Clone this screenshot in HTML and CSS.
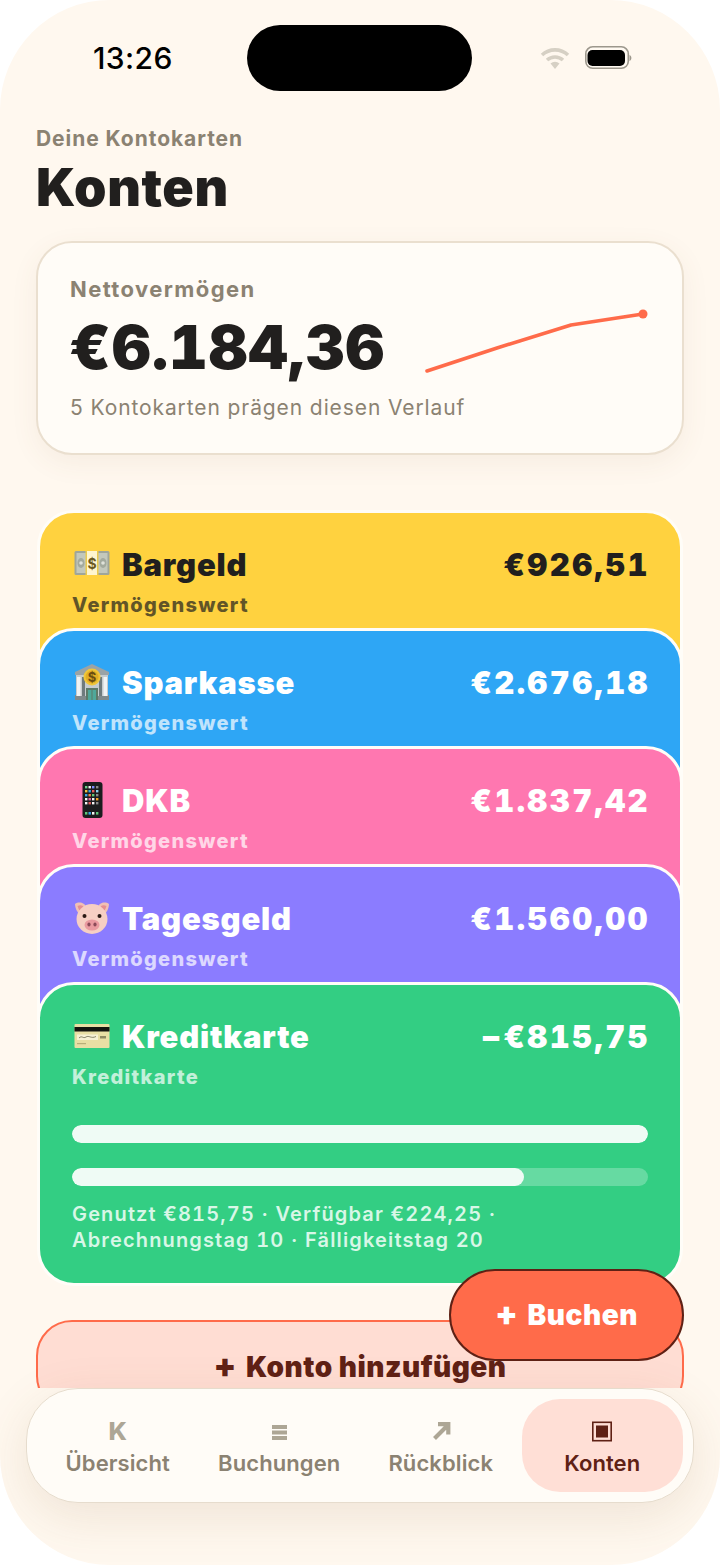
FILE: index.html
```html
<!DOCTYPE html>
<html>
<head>
    <title>Konten</title>
    <link rel="stylesheet" href="styles.css">
</head>

<body>
<div class="phone">
    <div class="status-bar">
        <span class="time">13:26</span>
        <div class="status-icons">
            <svg class="wifi" width="30" height="24" viewBox="0 0 30 24">
                <path d="M2 9 A19 19 0 0 1 28 9" fill="none" stroke="#d6d0c4" stroke-width="3.6"/>
                <path d="M7 14 A12 12 0 0 1 23 14" fill="none" stroke="#d6d0c4" stroke-width="3.6"/>
                <path d="M10.5 17.5 A7 7 0 0 1 19.500 17.500 L15 23 Z" fill="#d6d0c4"/>
            </svg>
            <svg class="battery" width="48" height="24" viewBox="0 0 48 24">
                <rect x="0.800" y="0.800" width="42.500" height="21.500" rx="7" fill="#fff9f1" stroke="#9c978c" stroke-width="1.600"/>
                <rect x="2.500" y="4" width="37.500" height="16" rx="5" fill="#000"/>
                <path d="M44.500 9 C47 10 47 14 44.500 15 Z" fill="#9c978c"/>
            </svg>
        </div>
    </div>
    <div class="island"></div>

    <div class="scroll">
        <p class="eyebrow">Deine Kontokarten</p>
        <h1 class="page-title">Konten</h1>

        <div class="summary">
            <div class="summary-label">Nettovermögen</div>
            <div class="summary-row">
                <div class="summary-amount">€6.184,36</div>
                <svg class="spark" width="225" height="68" viewBox="0 0 225 68">
                    <polyline points="2,63 72,40 146,17 218,6" fill="none" stroke="#ff6b4a" stroke-width="3.600" stroke-linecap="round" stroke-linejoin="round"/>
                    <circle cx="218" cy="6" r="4.500" fill="#ff6b4a"/>
                </svg>
            </div>
            <div class="summary-note">5 Kontokarten prägen diesen Verlauf</div>
        </div>

        <div class="cards">
            <div class="card card-yellow">
                <div class="card-top">
                    <div class="card-name">
                        <svg class="emoji" width="36" height="36" viewBox="0 0 36 36">
                            <rect x="0.500" y="5" width="35" height="24" rx="1.500" fill="#9fa69a"/>
                            <rect x="2.500" y="7" width="31" height="20" fill="#c3c8bc"/>
                            <ellipse cx="7" cy="17" rx="3.500" ry="5" fill="#a3aa9e"/>
                            <ellipse cx="29" cy="17" rx="3.500" ry="5" fill="#a3aa9e"/>
                            <circle cx="7" cy="17" r="1.800" fill="#dfe2da"/>
                            <circle cx="29" cy="17" r="1.800" fill="#dfe2da"/>
                            <rect x="13" y="5" width="10" height="24" fill="#fff6cf"/>
                            <rect x="11.500" y="5" width="1.500" height="24" fill="#e9c94e"/>
                            <rect x="23" y="5" width="1.500" height="24" fill="#e9c94e"/>
                            <text x="18" y="22.500" class="emoji-text" font-size="14" fill="#6b5a22">$</text>
                        </svg>
                        <span>Bargeld</span>
                    </div>
                    <div class="card-amount">€926,51</div>
                </div>
                <div class="card-sub">Vermögenswert</div>
            </div>

            <div class="card card-blue">
                <div class="card-top">
                    <div class="card-name">
                        <svg class="emoji" width="36" height="36" viewBox="0 0 36 36">
                            <path d="M18 0 L35 8 L35 11 L1 11 L1 8 Z" fill="#9aa3a6"/>
                            <rect x="1" y="31" width="34" height="5" fill="#7f8a8c"/>
                            <rect x="2" y="11" width="32" height="21" fill="#c6ccce"/>
                            <rect x="3" y="13" width="3.500" height="19" fill="#f1f3f3"/>
                            <rect x="8" y="13" width="3" height="19" fill="#6f7b7d"/>
                            <rect x="25" y="13" width="3" height="19" fill="#6f7b7d"/>
                            <rect x="29.500" y="13" width="3.500" height="19" fill="#f1f3f3"/>
                            <rect x="12" y="24" width="12" height="12" fill="#5d7a68"/>
                            <rect x="14" y="26" width="3.500" height="10" fill="#4fa89a"/>
                            <rect x="18.500" y="26" width="3.500" height="10" fill="#4fa89a"/>
                            <circle cx="18" cy="13" r="8.500" fill="#f0c63a"/>
                            <circle cx="18" cy="13" r="6.500" fill="#e3ae24"/>
                            <text x="18" y="18" class="emoji-text" font-size="13" fill="#6b4d10">$</text>
                        </svg>
                        <span>Sparkasse</span>
                    </div>
                    <div class="card-amount">€2.676,18</div>
                </div>
                <div class="card-sub">Vermögenswert</div>
            </div>

            <div class="card card-pink">
                <div class="card-top">
                    <div class="card-name">
                        <svg class="emoji" width="36" height="36" viewBox="0 0 36 36">
                            <rect x="8.500" y="0" width="20" height="36" rx="3" fill="#1c1c1e"/>
                            <rect x="11" y="4" width="2.400" height="2.400" fill="#6fd08c"/>
                            <rect x="14.500" y="4" width="2.400" height="2.400" fill="#f5f5f5"/>
                            <rect x="18" y="4" width="2.400" height="2.400" fill="#7d8cff"/>
                            <rect x="22" y="4" width="2.400" height="2.400" fill="#8a8a8a"/>
                            <rect x="11" y="8" width="2.400" height="2.400" fill="#f5c542"/>
                            <rect x="14.500" y="8" width="2.400" height="2.400" fill="#35a7e8"/>
                            <rect x="18" y="8" width="2.400" height="2.400" fill="#e85d5d"/>
                            <rect x="22" y="8" width="2.400" height="2.400" fill="#8bd1f0"/>
                            <rect x="11" y="12" width="2.400" height="2.400" fill="#35a7e8"/>
                            <rect x="14.500" y="12" width="2.400" height="2.400" fill="#f08a4b"/>
                            <rect x="18" y="12" width="2.400" height="2.400" fill="#5fc87a"/>
                            <rect x="22" y="12" width="2.400" height="2.400" fill="#8a8a8a"/>
                            <rect x="11" y="16" width="2.400" height="2.400" fill="#f5f5f5"/>
                            <rect x="14.500" y="16" width="2.400" height="2.400" fill="#e86aa6"/>
                            <rect x="18" y="16" width="2.400" height="2.400" fill="#f5f5f5"/>
                            <rect x="22" y="16" width="2.400" height="2.400" fill="#f5a623"/>
                            <rect x="11" y="20" width="2.400" height="2.400" fill="#f5f5f5"/>
                            <rect x="14.500" y="20" width="2.400" height="2.400" fill="#e85d5d"/>
                            <rect x="18" y="20" width="2.400" height="2.400" fill="#f5f5f5"/>
                            <rect x="22" y="20" width="2.400" height="2.400" fill="#8a8a8a"/>
                            <rect x="11" y="30" width="2.400" height="2.600" fill="#5fc87a"/>
                            <rect x="14.500" y="30" width="2.400" height="2.600" fill="#35a7e8"/>
                            <rect x="18" y="30" width="2.400" height="2.600" fill="#f5f5f5"/>
                            <rect x="22" y="30" width="2.400" height="2.600" fill="#5fc87a"/>
                        </svg>
                        <span>DKB</span>
                    </div>
                    <div class="card-amount">€1.837,42</div>
                </div>
                <div class="card-sub">Vermögenswert</div>
            </div>

            <div class="card card-purple">
                <div class="card-top">
                    <div class="card-name">
                        <svg class="emoji" width="36" height="36" viewBox="0 0 36 36">
                            <path d="M1 4 C5 1 11 3 12 7 L6 15 C3 12 1 8 1 4 Z" fill="#f1c0b4"/>
                            <path d="M35 4 C31 1 25 3 24 7 L30 15 C33 12 35 8 35 4 Z" fill="#f1c0b4"/>
                            <path d="M3.500 6 C6 4.500 9 5 10 7.500 L6.500 12 C5 10 4 8 3.500 6 Z" fill="#e58f91"/>
                            <path d="M32.500 6 C30 4.500 27 5 26 7.500 L29.500 12 C31 10 32 8 32.500 6 Z" fill="#e58f91"/>
                            <ellipse cx="18" cy="19" rx="15.500" ry="15" fill="#f6cfc3"/>
                            <circle cx="10.500" cy="16" r="2" fill="#2a1a14"/>
                            <circle cx="25.500" cy="16" r="2" fill="#2a1a14"/>
                            <ellipse cx="18" cy="25" rx="7.500" ry="5.500" fill="#ea9aa0"/>
                            <ellipse cx="15" cy="24.500" rx="1.600" ry="2" fill="#8c4a58"/>
                            <ellipse cx="21" cy="24.500" rx="1.600" ry="2" fill="#8c4a58"/>
                        </svg>
                        <span>Tagesgeld</span>
                    </div>
                    <div class="card-amount">€1.560,00</div>
                </div>
                <div class="card-sub">Vermögenswert</div>
            </div>

            <div class="card card-green card-credit">
                <div class="card-top">
                    <div class="card-name">
                        <svg class="emoji" width="36" height="36" viewBox="0 0 36 36">
                            <rect x="0.500" y="6" width="35" height="24" rx="1" fill="#e8dfa4"/>
                            <rect x="0.500" y="9" width="35" height="4.500" fill="#14140f"/>
                            <rect x="3" y="16.500" width="21" height="5.500" fill="#f6f1d4"/>
                            <path d="M5 20 C8 17 9 21 12 19 C15 17 17 21 22 18.500" fill="none" stroke="#6b6a50" stroke-width="0.800"/>
                            <rect x="26" y="18" width="6" height="2.500" fill="#8f8a62"/>
                            <rect x="3" y="25" width="9" height="1.200" fill="#b8ae78"/>
                        </svg>
                        <span>Kreditkarte</span>
                    </div>
                    <div class="card-amount">−€815,75</div>
                </div>
                <div class="card-sub">Kreditkarte</div>
                <div class="bars">
                    <div class="bar"><div class="bar-fill" style="width: 100%"></div></div>
                    <div class="bar"><div class="bar-fill" style="width: 78.4%"></div></div>
                </div>
                <div class="card-meta">Genutzt €815,75 · Verfügbar €224,25 · Abrechnungstag 10 · Fälligkeitstag 20</div>
            </div>
        </div>

        <div class="add-account"><span class="plus">+</span>Konto hinzufügen</div>
    </div>

    <div class="fab"><span class="plus">+</span>Buchen</div>

    <div class="tabbar">
        <div class="tab">
            <span class="tab-icon tab-k">K</span>
            <span class="tab-label">Übersicht</span>
        </div>
        <div class="tab">
            <svg class="tab-icon" width="24" height="24" viewBox="0 0 24 24">
                <rect x="5" y="6" width="15" height="4" fill="#ada695"/>
                <rect x="5" y="11.500" width="15" height="4" fill="#ada695"/>
                <rect x="5" y="17" width="15" height="4" fill="#ada695"/>
            </svg>
            <span class="tab-label">Buchungen</span>
        </div>
        <div class="tab">
            <svg class="tab-icon" width="24" height="24" viewBox="0 0 24 24">
                <path d="M5.500 19.500 L18 7 M9 5.200 H19.300 V15.500" fill="none" stroke="#ada695" stroke-width="4.200"/>
            </svg>
            <span class="tab-label">Rückblick</span>
        </div>
        <div class="tab tab-active">
            <svg class="tab-icon" width="24" height="24" viewBox="0 0 24 24">
                <rect x="2.800" y="3.300" width="18.400" height="18.400" fill="none" stroke="#5f2115" stroke-width="1.600"/>
                <rect x="6" y="6.500" width="12" height="12" fill="#5f2115"/>
            </svg>
            <span class="tab-label">Konten</span>
        </div>
    </div>
</div>
</body>
</html>
```

FILE: styles.css
```css
body {
    margin: 0;
    background-color: #fff;
    font-family: 'Inter', 'Liberation Sans', sans-serif;
    color: #211f1e;
}

.phone {
    position: relative;
    width: 720px;
    height: 1565px;
    border-radius: 110px;
    overflow: hidden;
    background-color: #fff8ef;
    display: flex;
    flex-direction: column;
}

.status-bar {
    height: 116px;
    flex: none;
    box-sizing: border-box;
    padding: 38px 87px 0 93px;
    display: flex;
    justify-content: space-between;
    align-items: flex-start;
}

.time {
    font-size: 30px;
    line-height: 40px;
    font-weight: 500;
    letter-spacing: 0.4px;
    color: #000;
}

.status-icons {
    display: flex;
    gap: 15px;
    padding-top: 8px;
}

.island {
    position: absolute;
    left: 247px;
    top: 25px;
    width: 225px;
    height: 66px;
    border-radius: 33px;
    background-color: #000;
}

.scroll {
    flex: 1;
    min-height: 0;
    overflow: hidden;
    padding: 0 36px;
}

.eyebrow {
    margin: 10px 0 0;
    font-size: 21px;
    line-height: 26px;
    font-weight: 700;
    letter-spacing: 0.95px;
    color: #8b8272;
}

.page-title {
    margin: 5px 0 0;
    font-size: 52px;
    line-height: 62px;
    font-weight: 900;
    letter-spacing: 0.6px;
}

.summary {
    margin-top: 22px;
    height: 214px;
    box-sizing: border-box;
    padding: 32px 32px 0;
    background-color: #fffcf7;
    border: 2px solid #eadfcf;
    border-radius: 36px;
    box-shadow: 0 8px 28px rgba(130, 90, 50, 0.07);
}

.summary-label {
    font-size: 22px;
    line-height: 28px;
    font-weight: 700;
    letter-spacing: 1.4px;
    color: #8b8272;
}

.summary-row {
    display: flex;
    justify-content: space-between;
    margin-top: 10px;
    height: 68px;
}

.summary-amount {
    margin-left: -1px;
    font-size: 60px;
    line-height: 68px;
    font-weight: 900;
    letter-spacing: 1.1px;
    font-variant-numeric: tabular-nums;
}

.spark {
    margin-top: -5px;
}

.summary-note {
    margin-top: 13px;
    font-size: 21px;
    line-height: 28px;
    letter-spacing: 0.9px;
    color: #8b8272;
}

.cards {
    margin: 55px 1px 0;
}

.card {
    height: 200px;
    box-sizing: border-box;
    padding: 31px 32px 32px;
    border: 3px solid #fffdf8;
    border-radius: 37px;
    color: #fff;
}

.card + .card {
    margin-top: -82px;
}

.card-credit {
    height: 304px;
}

.card-yellow { background-color: #ffd23f; color: #211f1e; }
.card-blue { background-color: #2ea6f5; }
.card-pink { background-color: #ff77b0; }
.card-purple { background-color: #8b7cff; }
.card-green { background-color: #33ce83; }

.card-top {
    display: flex;
    justify-content: space-between;
    align-items: center;
    height: 40px;
}

.card-name {
    display: flex;
    align-items: center;
    gap: 12px;
    padding-left: 2px;
    font-size: 31px;
    font-weight: 900;
    letter-spacing: 0.8px;
}

.emoji {
    flex: none;
}

.emoji-text {
    font-family: 'Inter', sans-serif;
    font-weight: 700;
    letter-spacing: 0;
    text-anchor: middle;
}

.card-amount {
    font-size: 31px;
    font-weight: 900;
    letter-spacing: 2.4px;
    margin-right: -2px;
    font-variant-numeric: tabular-nums;
}

.card-sub {
    margin-top: 8px;
    font-size: 20px;
    line-height: 26px;
    font-weight: 800;
    letter-spacing: 1.3px;
    opacity: 0.7;
}

.bars {
    margin-top: 35px;
    display: flex;
    flex-direction: column;
    gap: 25px;
}

.bar {
    height: 18px;
    border-radius: 9px;
    background-color: rgba(255, 255, 255, 0.25);
    overflow: hidden;
}

.bar-fill {
    height: 100%;
    border-radius: 9px;
    background-color: #effbf5;
}

.card-meta {
    margin-top: 15px;
    width: 480px;
    font-size: 20px;
    line-height: 26px;
    font-weight: 600;
    letter-spacing: 1.15px;
    color: #d8f7e7;
    font-variant-numeric: tabular-nums;
}

.add-account {
    margin-top: 34px;
    height: 92px;
    box-sizing: border-box;
    padding-top: 25px;
    background-color: #ffddd3;
    border: 2px solid #ff6b4a;
    border-radius: 36px;
    text-align: center;
    font-size: 28px;
    line-height: 40px;
    font-weight: 900;
    letter-spacing: 0.5px;
    color: #5f2115;
}

.plus {
    margin-right: 9px;
    font-size: 33px;
    line-height: 1;
}

.fab {
    position: absolute;
    right: 36px;
    top: 1269px;
    width: 235px;
    height: 92px;
    box-sizing: border-box;
    border: 2px solid #5f2115;
    border-radius: 46px;
    background-color: #ff6b4a;
    color: #fff;
    font-size: 28px;
    line-height: 88px;
    font-weight: 900;
    letter-spacing: 0.6px;
    text-align: center;
}

.tabbar {
    flex: none;
    margin: 0 26px 62px;
    height: 115px;
    box-sizing: border-box;
    padding: 10px;
    display: grid;
    grid-template-columns: repeat(4, 1fr);
    background-color: #fffcf7;
    border: 1.5px solid #e6dccd;
    border-radius: 52px;
    box-shadow: 0 14px 50px rgba(130, 90, 50, 0.13);
}

.tab {
    display: flex;
    flex-direction: column;
    align-items: center;
    padding-top: 20px;
    border-radius: 38px;
    color: #8b8272;
}

.tab-icon {
    display: block;
    height: 24px;
    margin-bottom: 6px;
}

.tab-k {
    font-size: 25px;
    line-height: 24px;
    font-weight: 800;
    color: #ada695;
}

.tab-label {
    font-size: 22px;
    line-height: 28px;
    font-weight: 600;
    letter-spacing: 0.1px;
}

.tab-active {
    background-color: #ffdfd6;
    color: #5f2115;
}
```
